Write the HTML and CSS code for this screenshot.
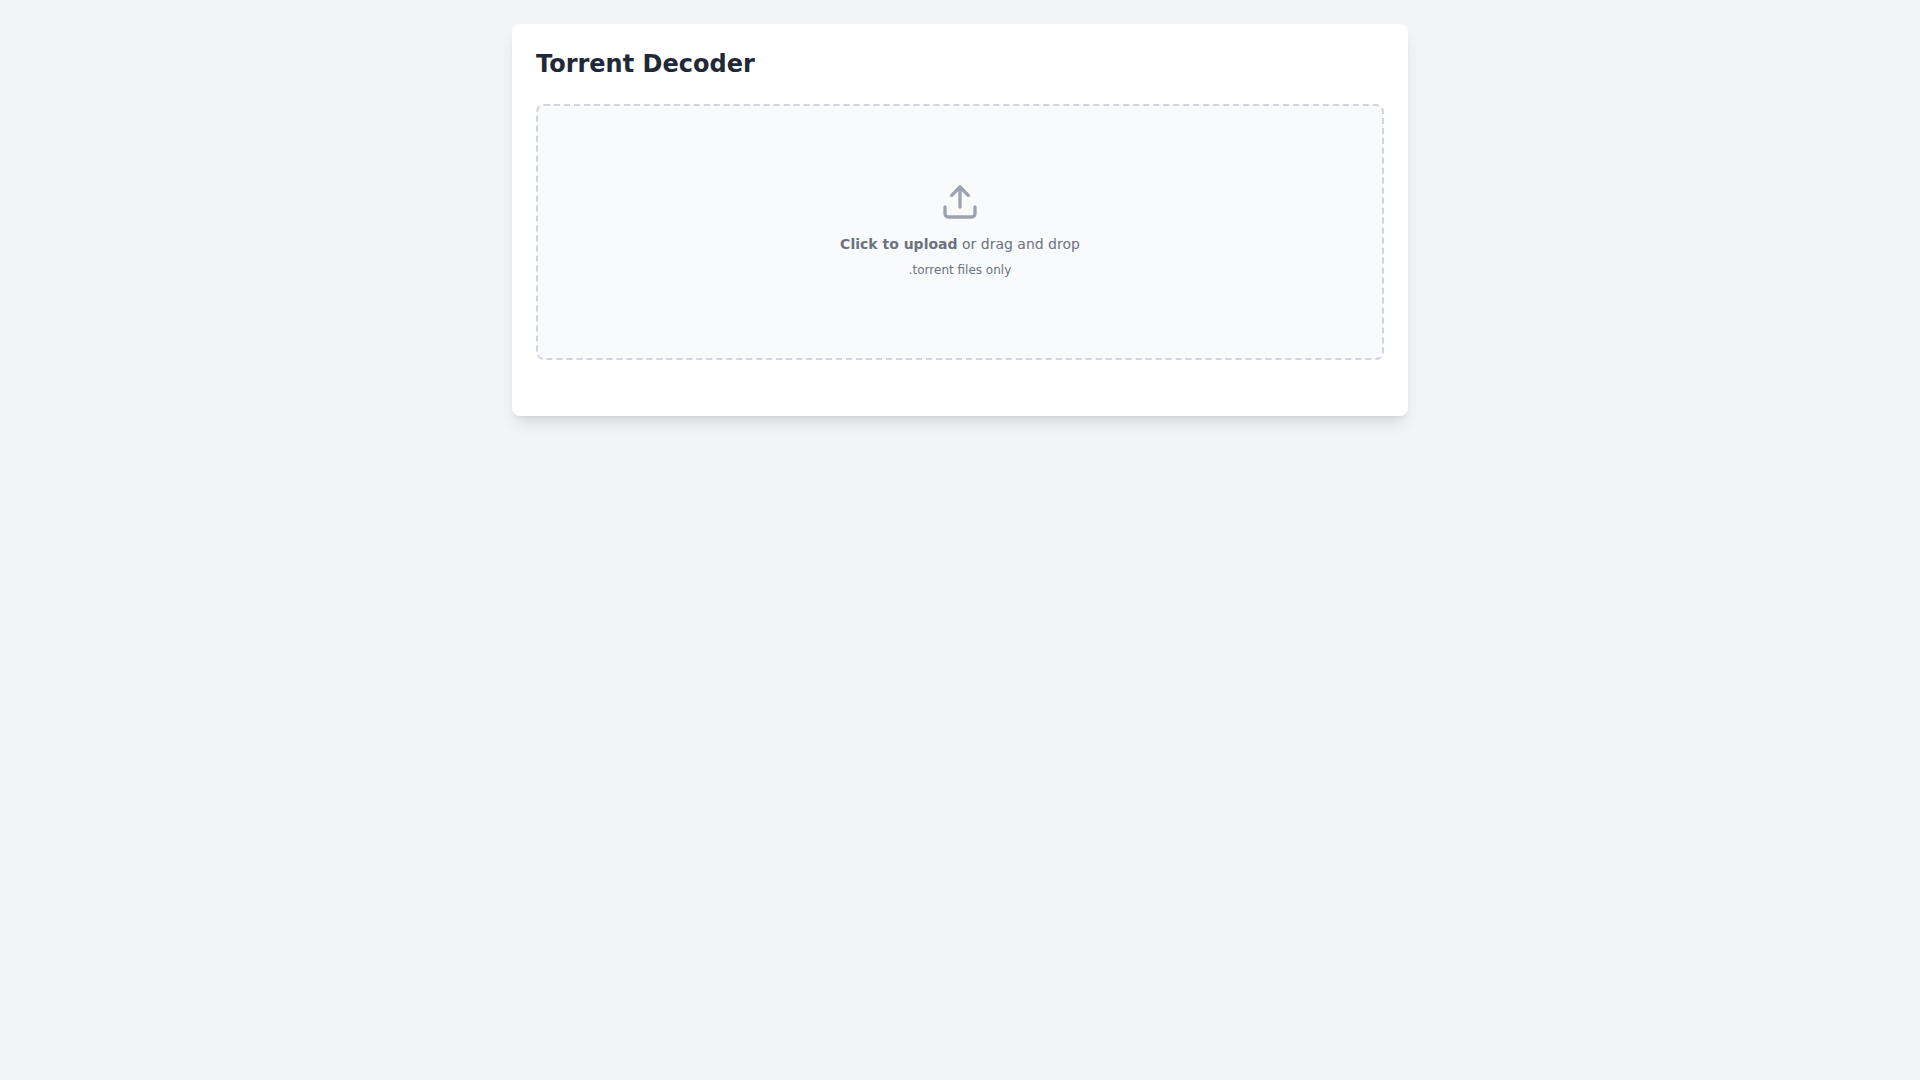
FILE: index.html
```html
<!DOCTYPE html>
<html lang="en">
<head>
  <meta charset="utf-8">
  <meta name="viewport" content="width=device-width, initial-scale=1">
  <title>Torrent Decoder</title>
  <link rel="stylesheet" href="styles.css">
</head>
<body>
  <main class="card">
    <h1 class="title">Torrent Decoder</h1>
    <label class="dropzone" for="torrent-file">
      <svg class="dropzone-icon" viewBox="0 0 24 24" fill="none" stroke="currentColor" stroke-width="2" stroke-linecap="round" stroke-linejoin="round" aria-hidden="true">
        <path d="M21 15v4a2 2 0 0 1-2 2H5a2 2 0 0 1-2-2v-4"/>
        <polyline points="17 8 12 3 7 8"/>
        <line x1="12" x2="12" y1="3" y2="15"/>
      </svg>
      <span class="dropzone-text"><strong>Click to upload</strong> or drag and drop</span>
      <span class="dropzone-hint">.torrent files only</span>
      <input class="file-input" id="torrent-file" type="file" accept=".torrent">
    </label>
  </main>
</body>
</html>
```

FILE: styles.css
```css
*,
*::before,
*::after {
  box-sizing: border-box;
}

body {
  margin: 0;
  padding: 24px;
  background: #f3f4f6;
  font-family: "DejaVu Sans", sans-serif;
  line-height: 24px;
}

.card {
  max-width: 896px;
  margin: 0 auto;
  padding: 24px 24px 56px;
  background: #fff;
  border-radius: 8px;
  box-shadow: 0 10px 15px -3px rgba(0, 0, 0, 0.1), 0 4px 6px -4px rgba(0, 0, 0, 0.1);
}

.title {
  margin: 0 0 24px;
  color: #1f2937;
  font-size: 24px;
  line-height: 32px;
  font-weight: 700;
}

.dropzone {
  display: flex;
  flex-direction: column;
  align-items: center;
  justify-content: center;
  min-height: 256px;
  padding: 20px 0 24px;
  border: 2px dashed #d1d5db;
  border-radius: 8px;
  background: #f9fafb;
  color: #6b7280;
  cursor: pointer;
}

.dropzone:hover {
  background: #f3f4f6;
}

.dropzone:focus-within {
  border-color: #6b7280;
}

.dropzone-icon {
  width: 40px;
  height: 40px;
  margin-bottom: 12px;
  color: #9ca3af;
}

.dropzone-text {
  margin-bottom: 8px;
  font-size: 14px;
  line-height: 20px;
}

.dropzone-text strong {
  font-weight: 600;
}

.dropzone-hint {
  font-size: 12px;
  line-height: 16px;
}

.file-input {
  width: 1px;
  height: 1px;
  margin-bottom: -1px;
  opacity: 0;
}
```
